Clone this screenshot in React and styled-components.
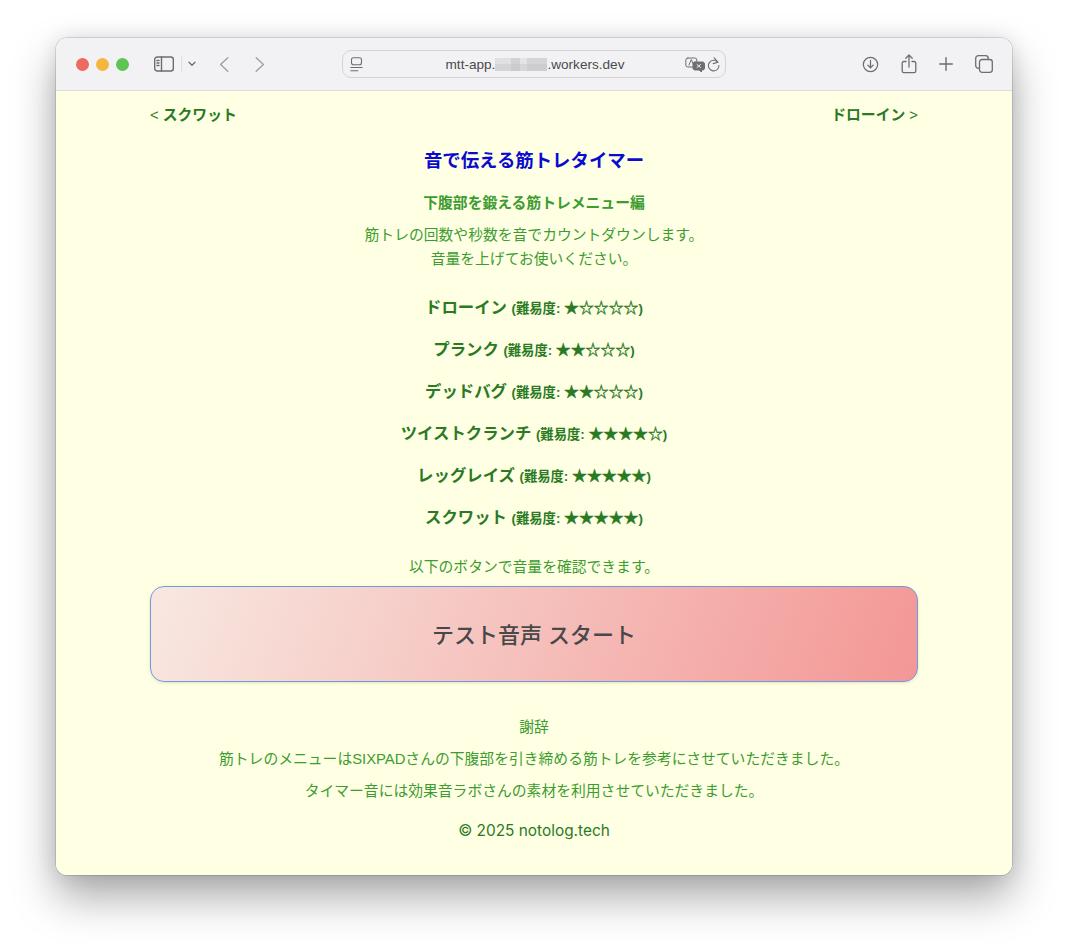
import React from "react";
import styled, { createGlobalStyle } from "styled-components";

const Global = createGlobalStyle`
  html, body { margin: 0; padding: 0; background: #fff; }
  body { font-family: "Liberation Sans", "Noto Sans CJK JP", sans-serif; }
`;

const Page = styled.div`
  width: 1068px;
  height: 949px;
  box-sizing: border-box;
  padding: 38px 56px 0;
  overflow: hidden;
`;

const Win = styled.div`
  width: 956px;
  border-radius: 11px;
  overflow: hidden;
  box-shadow: 0 0 0 0.5px rgba(0, 0, 0, 0.24), 0 22px 44px rgba(0, 0, 0, 0.34), 0 0 20px rgba(0, 0, 0, 0.1);
`;

const Toolbar = styled.div`
  height: 53px;
  box-sizing: border-box;
  background: #f2f2f5;
  border-bottom: 1px solid #dcdcdc;
  display: flex;
  align-items: center;
  padding: 0 19px 0 20px;
`;

const Lights = styled.div`
  display: flex;
  gap: 7px;
  margin-right: 25px;
`;

const Light = styled.span`
  width: 13px;
  height: 13px;
  border-radius: 50%;
  background: ${(p) => p.$c};
`;

const Icon = styled.svg`
  display: block;
  flex: none;
  fill: none;
  stroke: ${(p) => p.$s || "#6e6e70"};
  stroke-width: ${(p) => p.$w || 1.4};
  stroke-linecap: round;
  stroke-linejoin: round;
  margin-left: ${(p) => p.$ml || 0}px;
`;

const Divider = styled.span`
  width: 1px;
  height: 16px;
  background: #dedee0;
  margin-left: 7px;
`;

const Address = styled.div`
  width: 384px;
  height: 28px;
  box-sizing: border-box;
  margin-left: 77px;
  border: 1px solid #d3d3d6;
  border-radius: 9px;
  display: flex;
  align-items: center;
  padding: 0 5px 0 7px;
`;

const Url = styled.div`
  flex: 1;
  display: flex;
  justify-content: center;
  align-items: center;
  font-size: 13.6px;
  color: #4a4a4c;
  padding-left: 22px;
`;

const Blur = styled.span`
  display: inline-block;
  width: 52px;
  height: 13px;
  background:
    linear-gradient(180deg, transparent 0 45%, rgba(190, 190, 194, 0.35) 45% 100%),
    linear-gradient(90deg, #e0e0e2 0 30%, #d2d2d5 30% 48%, #e4e4e6 48% 62%, #d5d5d8 62% 100%);
`;

const ToolRight = styled.div`
  margin-left: auto;
  display: flex;
  align-items: center;
  gap: 22px;
`;

const Content = styled.div`
  background: #ffffe3;
  padding: 12px 94px 32px;
  text-align: center;
  color: #3c9c30;
  font-size: 14.8px;
  line-height: 24px;
`;

const Nav = styled.nav`
  display: flex;
  justify-content: space-between;
  font-weight: 700;
  color: #2a7a24;
`;

const NavLink = styled.a`
  color: inherit;
  text-decoration: none;
`;

const Arrow = styled.span`
  font-weight: 400;
`;

const Title = styled.h1`
  margin: 22px 0 0;
  font-size: 18.4px;
  line-height: 24px;
  font-weight: 700;
  color: #0a0ad0;
`;

const Sub = styled.h2`
  margin: 18px 0 0;
  font-size: 14.8px;
  line-height: 24px;
  font-weight: 700;
  color: #3c9c30;
`;

const Para = styled.p`
  margin: ${(p) => p.$mt ?? 0}px 0 0;
`;

const List = styled.ul`
  list-style: none;
  margin: 24px 0 0;
  padding: 0;
  display: flex;
  flex-direction: column;
  gap: 18px;
`;

const Item = styled.li`
  height: 24px;
  font-size: 16.4px;
  font-weight: 700;
  color: #2a7a24;
`;

const Level = styled.small`
  font-size: 13.3px;
  line-height: 1;
`;

const Stars = styled.span`
  font-size: 14.9px;
  line-height: 1;
  -webkit-text-stroke: 0.3px #2a7a24;
`;

const TestButton = styled.button`
  display: block;
  width: 100%;
  height: 96px;
  margin-top: 7px;
  padding: 0 0 2px;
  border: 1px solid #6f9bd8;
  border-radius: 14px;
  background: linear-gradient(110deg, #f8e8e1 0%, #f39795 100%);
  box-shadow: 0 1px 3px rgba(0, 0, 0, 0.12);
  color: #48484a;
  font-family: inherit;
  font-size: 22px;
  font-weight: 500;
`;

const Thanks = styled.p`
  margin: ${(p) => p.$mt}px 0 0;
`;

const Copy = styled.p`
  margin: 16px 0 0;
  font-size: 15.4px;
  color: #2a7a24;
  font-family: "Inter", "Liberation Sans", sans-serif;
`;

const items = [
  ["ドローイン", "★☆☆☆☆"],
  ["プランク", "★★☆☆☆"],
  ["デッドバグ", "★★☆☆☆"],
  ["ツイストクランチ", "★★★★☆"],
  ["レッグレイズ", "★★★★★"],
  ["スクワット", "★★★★★"],
];

export default function App() {
  return (
    <Page>
      <Global />
      <Win>
        <Toolbar>
          <Lights>
            <Light $c="#ec6a5e" />
            <Light $c="#f4b63f" />
            <Light $c="#5fc454" />
          </Lights>
          <Icon width="20" height="16" viewBox="0 0 20 16">
            <rect x="0.7" y="1" width="18.6" height="14" rx="2.5" />
            <path d="M7.5 1v14M3 4.5h2M3 7h2M3 9.5h2" />
          </Icon>
          <Divider />
          <Icon width="8" height="6" viewBox="0 0 8 6" $ml={6} $w={1.3}>
            <path d="M1 1.2l3 3 3-3" />
          </Icon>
          <Icon width="10" height="15" viewBox="0 0 10 15" $ml={23} $s="#a0a0a2" $w={1.4}>
            <path d="M8.8 0.8L1.6 7.5l7.2 6.7" />
          </Icon>
          <Icon width="10" height="15" viewBox="0 0 10 15" $ml={26} $s="#a0a0a2" $w={1.4}>
            <path d="M1.2 0.8l7.2 6.7-7.2 6.7" />
          </Icon>
          <Address>
            <Icon width="13" height="15" viewBox="0 0 13 15" $w={1.1}>
              <rect x="1.5" y="0.8" width="10" height="7" rx="2" />
              <path d="M0.8 10.5h11.4M0.8 13.8h7" />
            </Icon>
            <Url>
              mtt-app.
              <Blur />
              .workers.dev
            </Url>
            <Icon width="20" height="15" viewBox="0 0 20 15" $w={1}>
              <rect x="0.8" y="1" width="11" height="9" rx="2" />
              <path d="M4 8l2.3-5.5L8.6 8" />
              <path d="M10 5h7.5a2 2 0 0 1 2 2v4a2 2 0 0 1-2 2h-1v2l-2.5-2H10a2 2 0 0 1-2-2V7a2 2 0 0 1 2-2z" fill="#6e6e70" />
              <path d="M12 7.5l3.5 3M15.5 7.5l-3.5 3" stroke="#f2f2f5" />
            </Icon>
            <Icon width="13" height="15" viewBox="0 0 13 15" $ml={2} $w={1.1}>
              <path d="M10.8 5.2A5.3 5.3 0 1 0 12 8.6" />
              <path d="M7.2 0.8l3.6 4.4-4.6 1.4" />
            </Icon>
          </Address>
          <ToolRight>
            <Icon width="17" height="17" viewBox="0 0 19 19" $w={1.4}>
              <circle cx="9.5" cy="9.5" r="8" />
              <path d="M9.5 5v8M6.5 10.2l3 3 3-3" />
            </Icon>
            <Icon width="16" height="20" viewBox="0 0 16 20" $w={1.3}>
              <path d="M5 7.5H2.8a1.6 1.6 0 0 0-1.6 1.6v8a1.6 1.6 0 0 0 1.6 1.6h10.4a1.6 1.6 0 0 0 1.6-1.6v-8a1.6 1.6 0 0 0-1.6-1.6H11" />
              <path d="M8 13V1.2M4.8 4.2L8 1l3.2 3.2" />
            </Icon>
            <Icon width="14" height="14" viewBox="0 0 14 14" $w={1.4}>
              <path d="M7 0.7v12.6M0.7 7h12.6" />
            </Icon>
            <Icon width="18" height="18" viewBox="0 0 18 18" $w={1.3}>
              <rect x="4.5" y="4.5" width="12.8" height="12.8" rx="2.6" />
              <path d="M4.5 13.2H3.3a2.6 2.6 0 0 1-2.6-2.6V3.3A2.6 2.6 0 0 1 3.3.7h7.3a2.6 2.6 0 0 1 2.6 2.6v1.2" />
            </Icon>
          </ToolRight>
        </Toolbar>
        <Content>
          <Nav>
            <NavLink><Arrow>&lt;</Arrow> スクワット</NavLink>
            <NavLink>ドローイン <Arrow>&gt;</Arrow></NavLink>
          </Nav>
          <Title>音で伝える筋トレタイマー</Title>
          <Sub>下腹部を鍛える筋トレメニュー編</Sub>
          <Para $mt={8}>
            筋トレの回数や秒数を音でカウントダウンします。
            <br />
            音量を上げてお使いください。
          </Para>
          <List>
            {items.map(([name, stars]) => (
              <Item key={name}>
                {name} <Level>(難易度: <Stars>{stars}</Stars>)</Level>
              </Item>
            ))}
          </List>
          <Para $mt={26}>以下のボタンで音量を確認できます。</Para>
          <TestButton>テスト音声 スタート</TestButton>
          <Thanks $mt={33}>謝辞</Thanks>
          <Thanks $mt={8}>筋トレのメニューはSIXPADさんの下腹部を引き締める筋トレを参考にさせていただきました。</Thanks>
          <Thanks $mt={8}>タイマー音には効果音ラボさんの素材を利用させていただきました。</Thanks>
          <Copy>© 2025 notolog.tech</Copy>
        </Content>
      </Win>
    </Page>
  );
}
